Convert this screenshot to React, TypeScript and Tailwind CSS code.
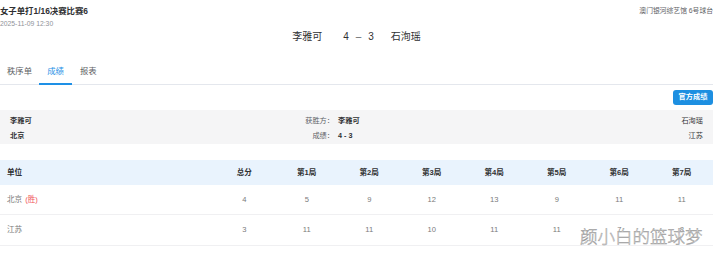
import React from "react";

const cols = ["单位", "总分", "第1局", "第2局", "第3局", "第4局", "第5局", "第6局", "第7局"];
const rows = [
  { name: "北京", win: true, vals: ["4", "5", "9", "12", "13", "9", "11", "11"] },
  { name: "江苏", win: false, vals: ["3", "11", "11", "10", "11", "11", "7", "8"] },
];

export default function App() {
  return (
    <div className="relative w-[713px] bg-white font-['Liberation_Sans','Noto_Sans_CJK_SC',sans-serif]">
      {/* header */}
      <div className="grid h-[58px] grid-cols-[1fr_auto_1fr]">
        <div className="pt-[5px]">
          <div className="text-[8.4px] font-bold leading-[13px] text-[#303133]">女子单打1/16决赛比赛6</div>
          <div className="mt-[1px] text-[6.8px] leading-[10px] text-[#909399]">2025-11-09 12:30</div>
        </div>
        <div className="flex items-start pt-[31px] text-[10px] leading-[12px] text-[#303133]">
          <span>李雅可</span>
          <span className="ml-[21px]">4</span>
          <span className="ml-[7px] text-[#606266]">–</span>
          <span className="ml-[7px]">3</span>
          <span className="ml-[17px]">石洵瑶</span>
        </div>
        <div className="pt-[6px] text-right text-[6.8px] leading-[10px] text-[#606266]">澳门银河综艺馆 6号球台</div>
      </div>

      {/* tabs */}
      <div className="flex h-[27px] border-b border-[#e4e7ed] text-[8.4px] leading-[12px] text-[#606266]">
        <div className="-mb-px h-[27px] pl-[7px] pr-[7px] pt-[7px]">秩序单</div>
        <div className="-mb-px h-[27px] border-b-2 border-[#1e90e6] px-[8px] pt-[7px] text-[#1e90e6]">成绩</div>
        <div className="-mb-px h-[27px] px-[8px] pt-[7px]">报表</div>
      </div>

      {/* button */}
      <div className="mt-[5px] flex justify-end">
        <div className="flex h-[15px] w-[40px] items-center justify-center rounded-[3px] bg-[#1d8fe1] text-[7.2px] font-bold text-white">
          官方成绩
        </div>
      </div>

      {/* summary panel */}
      <div className="mt-[5px] grid h-[34px] grid-cols-[250px_74px_auto_1fr] bg-[#f5f5f6] pl-[10px] pr-[10px] pt-[4px] text-[7.2px] leading-[13px] text-[#303133]">
        <div className="font-bold">李雅可</div>
        <div className="text-right text-[#606266]">获胜方：</div>
        <div className="pl-[4px] font-bold">李雅可</div>
        <div className="text-right">石洵瑶</div>
        <div className="font-bold">北京</div>
        <div className="text-right text-[#606266]">成绩：</div>
        <div className="pl-[4px] font-bold">4 - 3</div>
        <div className="text-right">江苏</div>
      </div>

      {/* table */}
      <div className="mt-[16px]">
        <div className="grid h-[25px] grid-cols-[213px_repeat(8,1fr)] items-center bg-[#e9f3fd] text-[7.6px] font-bold text-[#303133]">
          {cols.map((c, i) => (
            <div key={c} className={i === 0 ? "pl-[7px]" : "text-center"}>
              {c}
            </div>
          ))}
        </div>
        {rows.map((r, ri) => (
          <div
            key={r.name}
            className={`grid grid-cols-[213px_repeat(8,1fr)] items-center border-b border-[#f0f0f2] text-[7.6px] text-[#7a7a7a] ${ri === 0 ? "h-[30px]" : "h-[31px]"}`}
          >
            <div className="pl-[7px]">
              {r.name}
              {r.win && <span className="ml-[3px] text-[#f0565a]">(胜)</span>}
            </div>
            {r.vals.map((v, i) => (
              <div key={i} className="text-center">
                {v}
              </div>
            ))}
          </div>
        ))}
      </div>

      {/* watermark */}
      <div className="absolute left-[580px] top-[226px] text-[17.5px] leading-[20px] text-white [-webkit-text-stroke:0.5px_#9a9a9a] font-['Noto_Sans_CJK_SC',sans-serif] font-light">
        颜小白的篮球梦
      </div>
    </div>
  );
}
